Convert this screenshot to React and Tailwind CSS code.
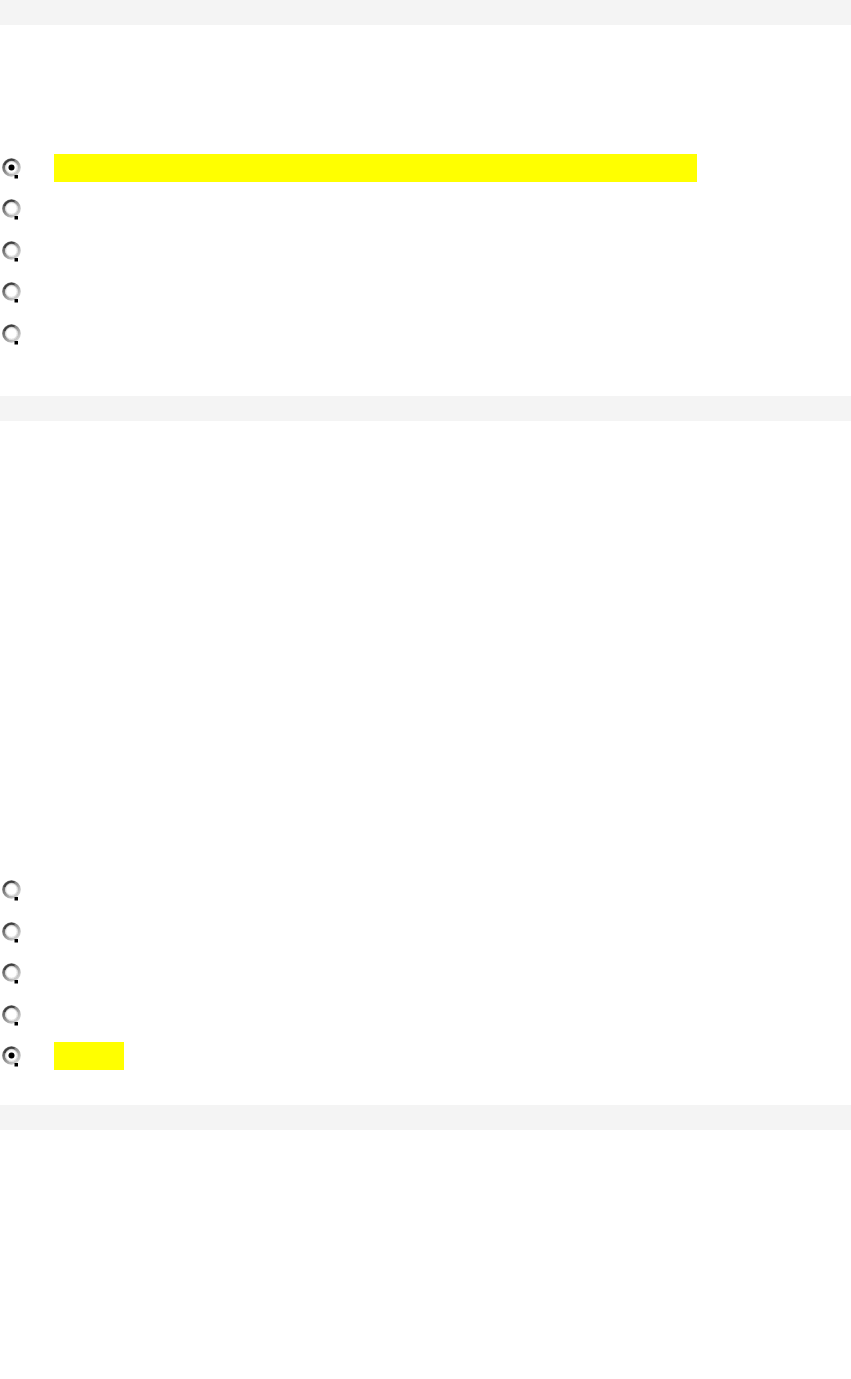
import React from "react";

function Radio({ checked }) {
  return (
    <svg width="21" height="22" viewBox="0 0 21 22" className="shrink-0">
      <defs>
        <linearGradient id="ring" x1="0" y1="0" x2="1" y2="1">
          <stop offset="0" stopColor="#4a4a4a" />
          <stop offset="0.45" stopColor="#8e8e8e" />
          <stop offset="1" stopColor="#e2e2e2" />
        </linearGradient>
      </defs>
      <circle cx="10.5" cy="10.5" r="7.8" fill="#fff" stroke="url(#ring)" strokeWidth="3" />
      <circle cx="10.5" cy="10.5" r="5.8" fill="none" stroke="#d8d8d8" strokeWidth="1" />
      <path d="M3.5 8 A7.5 7.5 0 0 1 13.5 3.2" fill="none" stroke="#3c3c3c" strokeWidth="1.6" />
      <rect x="13.5" y="18" width="3.5" height="3.5" fill="#000" />
      {checked && <circle cx="10.5" cy="10.5" r="3" fill="#000" />}
    </svg>
  );
}

function Row({ checked, mark }) {
  return (
    <div className="flex h-[41.5px] items-center">
      <div className="ml-[1px] flex w-[21px] items-center">
        <Radio checked={checked} />
      </div>
      {mark && <div className={`ml-[32px] h-[28px] bg-[#ffff00] ${mark}`} />}
    </div>
  );
}

export default function App() {
  return (
    <div className="min-h-[1379px] w-full bg-white font-['Liberation_Sans',sans-serif]">
      <div className="h-[25px] bg-[#f4f4f4]" />
      <div className="pt-[122px]">
        <Row checked mark="w-[643px]" />
        <Row />
        <Row />
        <Row />
        <Row />
      </div>
      <div className="mt-[41px] h-[25px] bg-[#f4f4f4]" />
      <div className="pt-[449px]">
        <Row />
        <Row />
        <Row />
        <Row />
        <Row checked mark="w-[70px]" />
      </div>
      <div className="mt-[28px] h-[25px] bg-[#f4f4f4]" />
    </div>
  );
}
